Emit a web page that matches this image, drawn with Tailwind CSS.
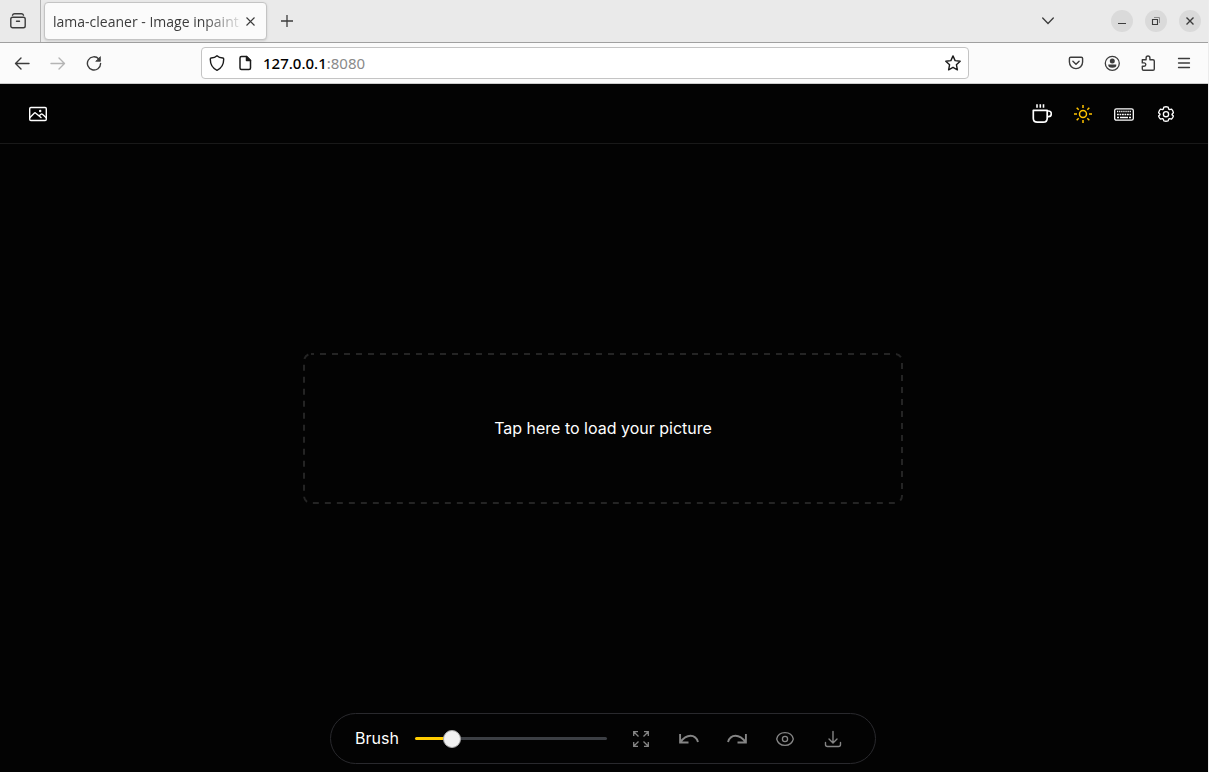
<!DOCTYPE html>
<html lang="en">
<head>
<meta charset="utf-8">
<title>lama-cleaner - Image inpainting</title>
<script src="https://cdn.jsdelivr.net/npm/@tailwindcss/browser@4"></script>
</head>
<body class="flex h-screen flex-col overflow-hidden border-r border-[#ececec] bg-black font-['Noto_Sans',sans-serif] text-[#3c3c3c]">

<!-- Tab strip -->
<div class="flex h-[43px] shrink-0 items-center border-b border-[#a0a0a0] bg-[#eaeaea]">
  <button aria-label="Firefox View" class="flex h-full w-[41px] items-center justify-center border-r border-[#b4b4b4] pr-1">
    <svg class="size-4" viewBox="0 0 16 16" fill="none" stroke="currentColor" stroke-width="1.4" stroke-linecap="round"><rect x=".8" y="4.3" width="14.4" height="10.5" rx="1.8"/><path d="M2.5 2.2Q3 .8 4.500 .8h7Q13 .8 13.500 2.200M6.500 8.300h3"/></svg>
  </button>
  <div class="ml-[3px] flex h-[38px] w-[223px] items-center rounded-sm border border-[#c4c4c4] bg-[#fbfbfb] pl-2 shadow-sm">
    <span class="w-[187px] overflow-hidden whitespace-nowrap pt-px font-['Open_Sans',sans-serif] text-sm [mask-image:linear-gradient(to_right,black_150px,transparent_192px)]">lama-cleaner - Image inpainting</span>
    <button aria-label="Close tab" class="flex size-5 items-center justify-center">
      <svg class="size-[9px]" viewBox="0 0 9 9" stroke="currentColor" stroke-width="1.1"><path d="M.5.5l8 8M8.500.5l-8 8"/></svg>
    </button>
  </div>
  <button aria-label="New tab" class="flex size-10 items-center justify-center">
    <svg class="size-3" viewBox="0 0 12 12" stroke="currentColor" stroke-width="1.3"><path d="M6 0v12M0 6h12"/></svg>
  </button>
  <button aria-label="List all tabs" class="ml-auto mr-[53px] flex size-5 items-center justify-center">
    <svg class="h-2 w-3" viewBox="0 0 12 8" fill="none" stroke="currentColor" stroke-width="1.3" stroke-linecap="round"><path d="M.7 1l5.300 5.500L11.300 1"/></svg>
  </button>
  <div class="mr-[7px] flex gap-3">
    <button aria-label="Minimize" class="flex size-[22px] items-center justify-center rounded-full bg-[#dadada]">
      <svg class="size-3" viewBox="0 0 12 12" stroke="currentColor"><path d="M2 8.500h8"/></svg>
    </button>
    <button aria-label="Restore" class="flex size-[22px] items-center justify-center rounded-full bg-[#dadada]">
      <svg class="size-3" viewBox="0 0 12 12" fill="none" stroke="currentColor"><path d="M2.500 4.500h5v5h-5z" stroke-width="1.100"/><path d="M4 2.500h5.500V8" stroke="#8c8c8c"/></svg>
    </button>
    <button aria-label="Close" class="flex size-[22px] items-center justify-center rounded-full bg-[#dadada]">
      <svg class="size-3" viewBox="0 0 12 12" stroke="currentColor" stroke-width="1.400"><path d="M2.500 2.500l7 7M9.500 2.500l-7 7"/></svg>
    </button>
  </div>
</div>

<!-- Navigation bar -->
<div class="flex h-[41px] shrink-0 items-center border-b border-[#cccccc] bg-[#fbfbfb]">
  <div class="flex pl-1">
    <button aria-label="Back" class="flex h-8 w-9 items-center justify-center">
      <svg class="size-4" viewBox="0 0 16 16" fill="none" stroke="currentColor" stroke-width="1.400" stroke-linecap="round" stroke-linejoin="round"><path d="M15 8.500H1.500M7 3L1.500 8.500 7 14"/></svg>
    </button>
    <button aria-label="Forward" disabled class="flex h-8 w-9 items-center justify-center text-[#b4b4b4]">
      <svg class="size-4" viewBox="0 0 16 16" fill="none" stroke="currentColor" stroke-width="1.400" stroke-linecap="round" stroke-linejoin="round"><path d="M1 8.500h13.500M9 3L14.500 8.500 9 14"/></svg>
    </button>
    <button aria-label="Reload" class="flex h-8 w-9 items-center justify-center">
      <svg class="size-4" viewBox="0 0 16 16" fill="none" stroke="currentColor" stroke-width="1.400" stroke-linecap="round"><path d="M12.800 3.900A6.600 6.600 0 1 0 14.600 8.500"/><path d="M14.400 2v4.300h-4.300z" fill="currentColor" stroke-width=".8" stroke-linejoin="round"/></svg>
    </button>
  </div>
  <div class="mx-[89px] flex h-8 flex-1 items-center rounded border border-[#c4c4c4] bg-white pr-[7px] pl-[7px] text-[#1c1c1c]">
    <svg class="size-4" viewBox="0 0 16 16" fill="none" stroke="currentColor" stroke-width="1.400" stroke-linejoin="round"><path d="M8 .8C6.800 2 4 2.900 2.200 3q-.9.100-.9 1C1.200 9.500 4 13.500 8 15.300c4-1.800 6.800-5.800 6.700-11.300q0-.9-.9-1C12 2.900 9.200 2 8 .8z"/></svg>
    <svg class="ml-3 size-4" viewBox="0 0 16 16" fill="none" stroke="currentColor" stroke-width="1.500" stroke-linejoin="round"><path d="M9.500 1.500h-5Q3 1.500 3 3v10q0 1.500 1.500 1.500h7.500q1.500 0 1.500-1.500V5.500z"/><path d="M9.500 1.500v4h4z" fill="currentColor"/></svg>
    <a href="#" class="ml-[10px] text-[15px] text-[#8a8a8a]"><span class="font-medium text-black">127.0.0.1</span>:8080</a>
    <button aria-label="Bookmark this page" class="ml-auto">
      <svg class="block size-4" viewBox="0 0 16 16" fill="none" stroke="currentColor" stroke-width="1.400" stroke-linejoin="round"><path d="M8 .9l2.100 4.700 5.100.6-3.800 3.500 1 5.100L8 12.300l-4.400 2.500 1-5.100L.8 6.200l5.100-.6z"/></svg>
    </button>
  </div>
  <div class="flex pr-[6px]">
    <button aria-label="Save to Pocket" class="flex h-8 w-9 items-center justify-center">
      <svg class="size-4" viewBox="0 0 16 16" fill="none" stroke="currentColor" stroke-width="1.400" stroke-linecap="round" stroke-linejoin="round"><path d="M2.700 2.200h10.600q1.300 0 1.300 1.300v3.500a6.600 6.600 0 0 1-13.200 0V3.500q0-1.300 1.300-1.300z"/><path d="M4.900 6.200L8 9.300l3.100-3.100"/></svg>
    </button>
    <button aria-label="Account" class="flex h-8 w-9 items-center justify-center">
      <svg class="size-4" viewBox="0 0 16 16"><circle cx="8.300" cy="8.300" r="7" fill="none" stroke="currentColor" stroke-width="1.300"/><circle cx="8.300" cy="6" r="2.500" fill="currentColor"/><path d="M4.300 9.600h8q.5 3.200-4 3.200t-4-3.200z" fill="currentColor"/></svg>
    </button>
    <button aria-label="Extensions" class="flex h-8 w-9 items-center justify-center">
      <svg class="size-4" viewBox="0 0 16 16" fill="none" stroke="currentColor" stroke-width="1.400" stroke-linejoin="round"><path d="M2.300 4.700h3.800V2.900a1.900 1.900 0 0 1 3.800 0v1.800h3q1.400 0 1.400 1.400v7.800q0 1.300-1.300 1.300H3.500q-1.200 0-1.200-1.200v-2.700h1.800a1.700 1.700 0 0 0 0-3.400H2.300z"/></svg>
    </button>
    <button aria-label="Application menu" class="flex h-8 w-9 items-center justify-center">
      <svg class="size-4" viewBox="0 0 16 16" stroke="currentColor" stroke-width="1.300" stroke-linecap="round"><path d="M2.500 3.500h11M2.500 8h11M2.500 12.500h11"/></svg>
    </button>
  </div>
</div>

<!-- Application -->
<div class="flex flex-1 flex-col bg-[#030303] font-[Inter,sans-serif] text-white">
  <header class="flex h-[60px] shrink-0 items-center justify-between border-b border-[#191919] pr-[21px] pl-[18px]">
    <button aria-label="Load image" class="flex size-10 items-center justify-center">
      <svg class="size-5" viewBox="0 0 20 20" fill="none" stroke="currentColor" stroke-width="1.400" stroke-linejoin="round" stroke-linecap="round"><rect x="1.700" y="3.500" width="16.600" height="13" rx="1.200"/><path d="M2 13.500l4.200-4.300q.8-.7 1.600 0l5.200 4.300M11.200 11.700l1.800-1.500q.7-.5 1.400 0l3.600 3.300"/><circle cx="12.200" cy="7" r=".5" fill="currentColor"/></svg>
    </button>
    <div class="flex">
      <a href="#" aria-label="Buy me a coffee" class="flex h-10 w-[41px] items-center justify-center">
        <svg class="size-5" viewBox="0 0 20 20" fill="none" stroke="currentColor" stroke-width="1.700" stroke-linejoin="round"><path d="M1.300 6.300h13.900v7.900q0 4-4 4H5.300q-4 0-4-4z"/><path d="M15.200 7h1.300a2.700 2.700 0 0 1 0 5.600h-1.300M5 .3v3.500M8.300.3v3.500M11.500.3v3.500" stroke-width="1.600"/></svg>
      </a>
      <button aria-label="Toggle theme" class="flex h-10 w-[41px] items-center justify-center text-[#ffc400]">
        <svg class="size-5" viewBox="0 0 20 20" fill="none" stroke="currentColor" stroke-width="1.500"><circle cx="10" cy="10" r="3.500"/><path d="M10 1v3M10 16v3M1 10h3M16 10h3M3.700 3.700l2 2M14.300 14.300l2 2M3.700 16.300l2-2M14.300 5.700l2-2"/></svg>
      </button>
      <button aria-label="Keyboard shortcuts" class="flex h-10 w-[41px] items-center justify-center">
        <svg class="size-5" viewBox="0 0 20 20" fill="none" stroke="currentColor"><rect x=".7" y="4.800" width="18.600" height="11.400" rx="1.800" stroke-width="1.300"/><path d="M3 7.500h14" stroke-width="1.400" stroke-dasharray="1.300 .8"/><path d="M3 10.500h14" stroke-width="1.400" stroke-dasharray="1.800 .7"/><path d="M3 13.500h2M6 13.500h8M15 13.500h2" stroke-width="1.300"/></svg>
      </button>
      <button aria-label="Settings" class="flex h-10 w-[43px] items-center justify-center">
        <svg class="size-[18px]" viewBox="0 0 20 20" fill="none" stroke="currentColor" stroke-width="1.500" stroke-linejoin="round"><path d="M7.600 2.400Q10 1.600 12.400 2.400l.6 2.100 1 .6 2.200-.5q1.600 1.700 2 4L16.700 10.200v.6l1.500 1.500q-.6 2-2 3.300l-2.200-.5-1 .6-.6 2q-2.400.8-4.800 0l-.6-2-1-.6-2.200.5q-1.400-1.300-2-3.300l1.500-1.500v-.9L1.800 8.500q.6-2.300 2-3.900l2.200.5 1-.6z"/><circle cx="10" cy="10.200" r="2.900"/></svg>
      </button>
    </div>
  </header>

  <main class="flex flex-1 items-center justify-center pr-[2px]">
    <label class="relative flex h-[151px] w-[600px] cursor-pointer items-center justify-center pb-[2px]">
      <svg class="absolute inset-0 size-full" fill="none" aria-hidden="true"><rect class="h-[calc(100%-2px)] w-[calc(100%-2px)]" x="1" y="1" rx="7" stroke="#242424" stroke-width="2" stroke-dasharray="6 6" stroke-dashoffset="3"/></svg>
      <span>Tap here to load your picture</span>
      <input type="file" accept="image/*" class="sr-only">
    </label>
  </main>

  <footer class="flex shrink-0 justify-center pr-[2px] pb-2">
    <div class="flex h-[51px] items-center rounded-full border border-[#29292d] pr-[18px] pl-6">
      <label for="brush" class="pb-[2px]">Brush</label>
      <input id="brush" type="range" min="0" max="100" value="16" class="mr-[10px] ml-4 h-[3px] w-48 appearance-none rounded-full bg-linear-to-r from-[#ffcc00] from-[37px] to-[#3c3f44] to-[37px] [&::-webkit-slider-thumb]:size-[18px] [&::-webkit-slider-thumb]:appearance-none [&::-webkit-slider-thumb]:rounded-full [&::-webkit-slider-thumb]:border [&::-webkit-slider-thumb]:border-[#a8a8a8] [&::-webkit-slider-thumb]:bg-[#f0f0f0]">
      <div class="flex text-[#858585]">
        <button aria-label="Reset zoom" class="flex h-10 w-12 items-center justify-center">
          <svg class="size-5" viewBox="0 0 20 20" fill="none" stroke="currentColor" stroke-width="1.300"><path d="M2.700 7V2.700H7M2.700 2.700l4.800 4.800M13 2.700h4.300V7M17.300 2.700l-4.800 4.800M2.700 13v4.300H7M2.700 17.300l4.800-4.800M13 17.300h4.300V13M17.300 17.300l-4.800-4.800"/></svg>
        </button>
        <button aria-label="Undo" class="flex h-10 w-12 items-center justify-center">
          <svg class="size-5" viewBox="0 0 20 20" fill="none" stroke="currentColor" stroke-width="1.900"><path d="M1.100 5v8.500h8.400M1.200 13.400Q6 6.800 11.500 6.800T19 13"/></svg>
        </button>
        <button aria-label="Redo" class="flex h-10 w-12 items-center justify-center">
          <svg class="size-5" viewBox="0 0 20 20" fill="none" stroke="currentColor" stroke-width="1.900"><path d="M18.900 5v8.500h-8.400M18.800 13.400Q14 6.800 8.500 6.800T1 13"/></svg>
        </button>
        <button aria-label="Show original" class="flex h-10 w-12 items-center justify-center">
          <svg class="size-5" viewBox="0 0 20 20" fill="none" stroke="currentColor" stroke-width="1.300"><path d="M1.700 10C2.600 6 5.700 3.700 10 3.700S17.400 6 18.300 10c-.9 4-4 6.300-8.300 6.300S2.600 14 1.700 10z"/><circle cx="10" cy="10" r="2.600"/></svg>
        </button>
        <button aria-label="Download" class="flex h-10 w-12 items-center justify-center">
          <svg class="size-5" viewBox="0 0 20 20" fill="none" stroke="currentColor" stroke-width="1.400" stroke-linecap="round" stroke-linejoin="round"><path d="M10 2.500v11M6 10l4 4 4-4M2.500 13.500v2q0 2 2 2h11q2 0 2-2v-2"/></svg>
        </button>
      </div>
    </div>
  </footer>
</div>
</body>
</html>
